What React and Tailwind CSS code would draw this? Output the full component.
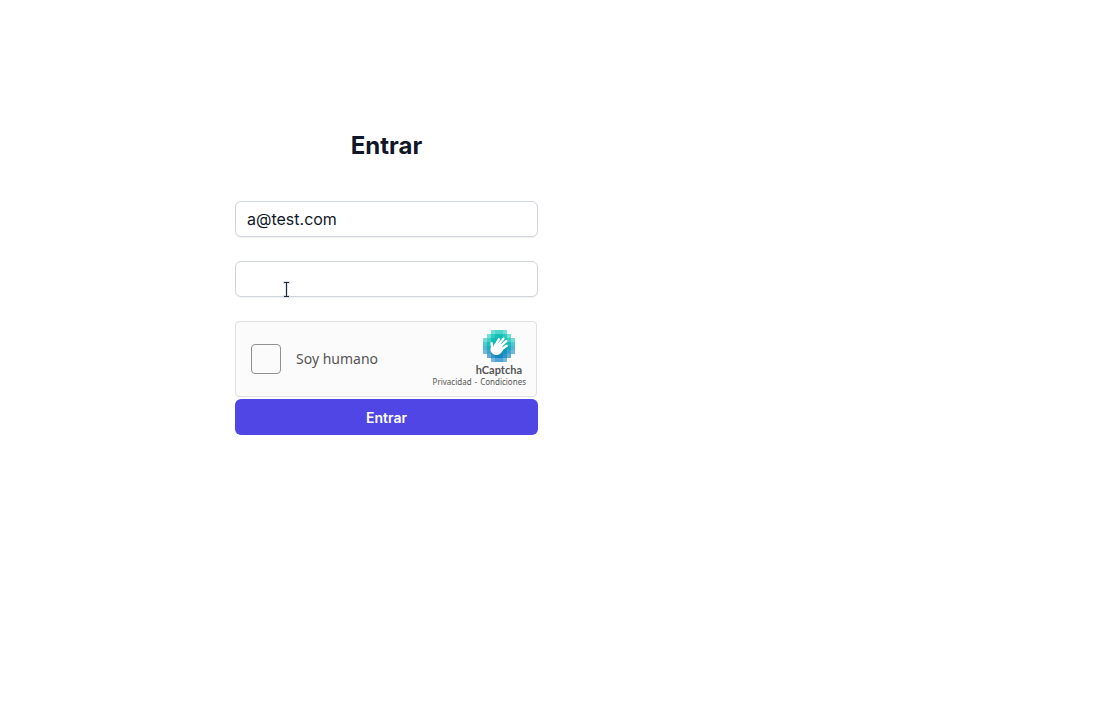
import React, { useState } from "react";

const LOGO_ROWS = [
  { from: 2, to: 5, colors: ["#70dfd6", "#50d5cc", "#50d5cc", "#70dfd6"] },
  { from: 1, to: 6, colors: ["#70dfd6", "#30cbc0", "#14c1b6", "#14c1b6", "#30cbc0", "#70dfd6"] },
  { from: 0, to: 7, colors: ["#70dcd5", "#40cec6", "#14beb4", "#0abab0", "#0abab0", "#14beb4", "#40cec6", "#70dcd5"] },
  { from: 0, to: 7, colors: ["#4cc9cb", "#20bcbe", "#0ab2b2", "#0ab2b2", "#0ab2b2", "#0ab2b2", "#20bcbe", "#4cc9cb"] },
  { from: 0, to: 7, colors: ["#50b9cf", "#20a8c0", "#0aa2b7", "#0aa2b7", "#0aa2b7", "#0aa2b7", "#20a8c0", "#50b9cf"] },
  { from: 0, to: 7, colors: ["#71b9dc", "#40a3ce", "#1893c0", "#0b92bc", "#0b92bc", "#1893c0", "#40a3ce", "#71b9dc"] },
  { from: 1, to: 6, colors: ["#62acd8", "#3096c8", "#1488bf", "#1488bf", "#3096c8", "#62acd8"] },
  { from: 2, to: 5, colors: ["#74b6de", "#50a5d4", "#50a5d4", "#74b6de"] },
];

function CaptchaLogo() {
  return (
    <svg viewBox="0 0 32 32" className="size-8" aria-hidden="true">
      {LOGO_ROWS.map((row, y) =>
        row.colors.map((color, i) => (
          <rect key={`${y}-${i}`} x={(row.from + i) * 4} y={y * 4} width="4" height="4" fill={color} />
        ))
      )}
      <g stroke="#fff" strokeLinecap="round" fill="none">
        <path d="M12 16 15.8 9.4" strokeWidth="2.5" />
        <path d="M14 16.5 20.4 8.8" strokeWidth="2.5" />
        <path d="M15.8 18 23.2 11.2" strokeWidth="2.5" />
        <path d="M17 20.6 23.6 15.8" strokeWidth="2.5" />
        <path d="M9.6 19 8.6 13.2" strokeWidth="2.6" />
      </g>
      <path
        d="M8.2 16 10.6 17 12 13.2 14.4 12.8 17.8 13.6 19.4 16.4 20.2 19.8C18 23.8 16 25.2 13.2 25 9.4 24.8 7.1 22 7.5 18.6Z"
        fill="#fff"
      />
    </svg>
  );
}

function TextCursor() {
  return (
    <svg
      viewBox="0 0 9 19"
      className="pointer-events-none absolute top-[19px] left-[47px] h-[19px] w-[9px]"
      aria-hidden="true"
    >
      <path d="M1 2.5h7M1 16.5h7M4.5 2.5v14" stroke="#dfe2ea" strokeWidth="3" fill="none" />
      <path d="M2 2.5h5M2 16.5h5M4.5 3v13" stroke="#1f2937" strokeWidth="1" fill="none" />
    </svg>
  );
}

const inputClass =
  "block h-9 w-full rounded-md border border-gray-300 bg-white px-[11px] text-base text-gray-900 shadow-2xs outline-none focus:border-indigo-600";

export default function App() {
  const [email, setEmail] = useState("a@test.com");
  const [password, setPassword] = useState("");

  return (
    <div className="grid min-h-screen grid-cols-[773fr_326fr] bg-white font-['Inter',sans-serif]">
      <main className="flex flex-col items-center pt-[129px]">
        <div className="w-full max-w-[303px]">
          <h1 className="text-center text-2xl leading-[34px] font-bold text-gray-900">Entrar</h1>
          <form className="mt-[38px]" onSubmit={(e) => e.preventDefault()}>
            <div className="flex flex-col gap-6">
              <input
                type="email"
                aria-label="Email"
                className={inputClass}
                value={email}
                onChange={(e) => setEmail(e.target.value)}
              />
              <div className="relative">
                <input
                  type="password"
                  aria-label="Contraseña"
                  className={inputClass}
                  value={password}
                  onChange={(e) => setPassword(e.target.value)}
                />
                <TextCursor />
              </div>
              <div className="mr-px flex h-[76px] items-center justify-between rounded border border-[#e0e0e0] bg-[#fbfbfb] pr-[10px] pl-[15px] font-['Noto_Sans',sans-serif] text-[#555555]">
                <label className="flex items-center gap-[15px] text-sm">
                  <input
                    type="checkbox"
                    className="size-[30px] appearance-none rounded border border-[#919191] bg-[#fbfbfb] checked:bg-[#4f46e5]"
                  />
                  Soy humano
                </label>
                <div className="flex flex-col items-end">
                  <div className="mr-1 flex flex-col items-center">
                    <CaptchaLogo />
                    <span className="mt-[2px] font-['Lato',sans-serif] text-[11px] leading-3 font-bold">hCaptcha</span>
                  </div>
                  <div className="flex gap-[3px] text-[8px] leading-3">
                    <a href="#privacidad">Privacidad</a>
                    <span>-</span>
                    <a href="#condiciones">Condiciones</a>
                  </div>
                </div>
              </div>
            </div>
            <button
              type="submit"
              className="mt-[2px] h-9 w-full rounded-md bg-[#4f46e5] pt-px text-sm leading-6 font-semibold text-white"
            >
              Entrar
            </button>
          </form>
        </div>
      </main>
    </div>
  );
}
